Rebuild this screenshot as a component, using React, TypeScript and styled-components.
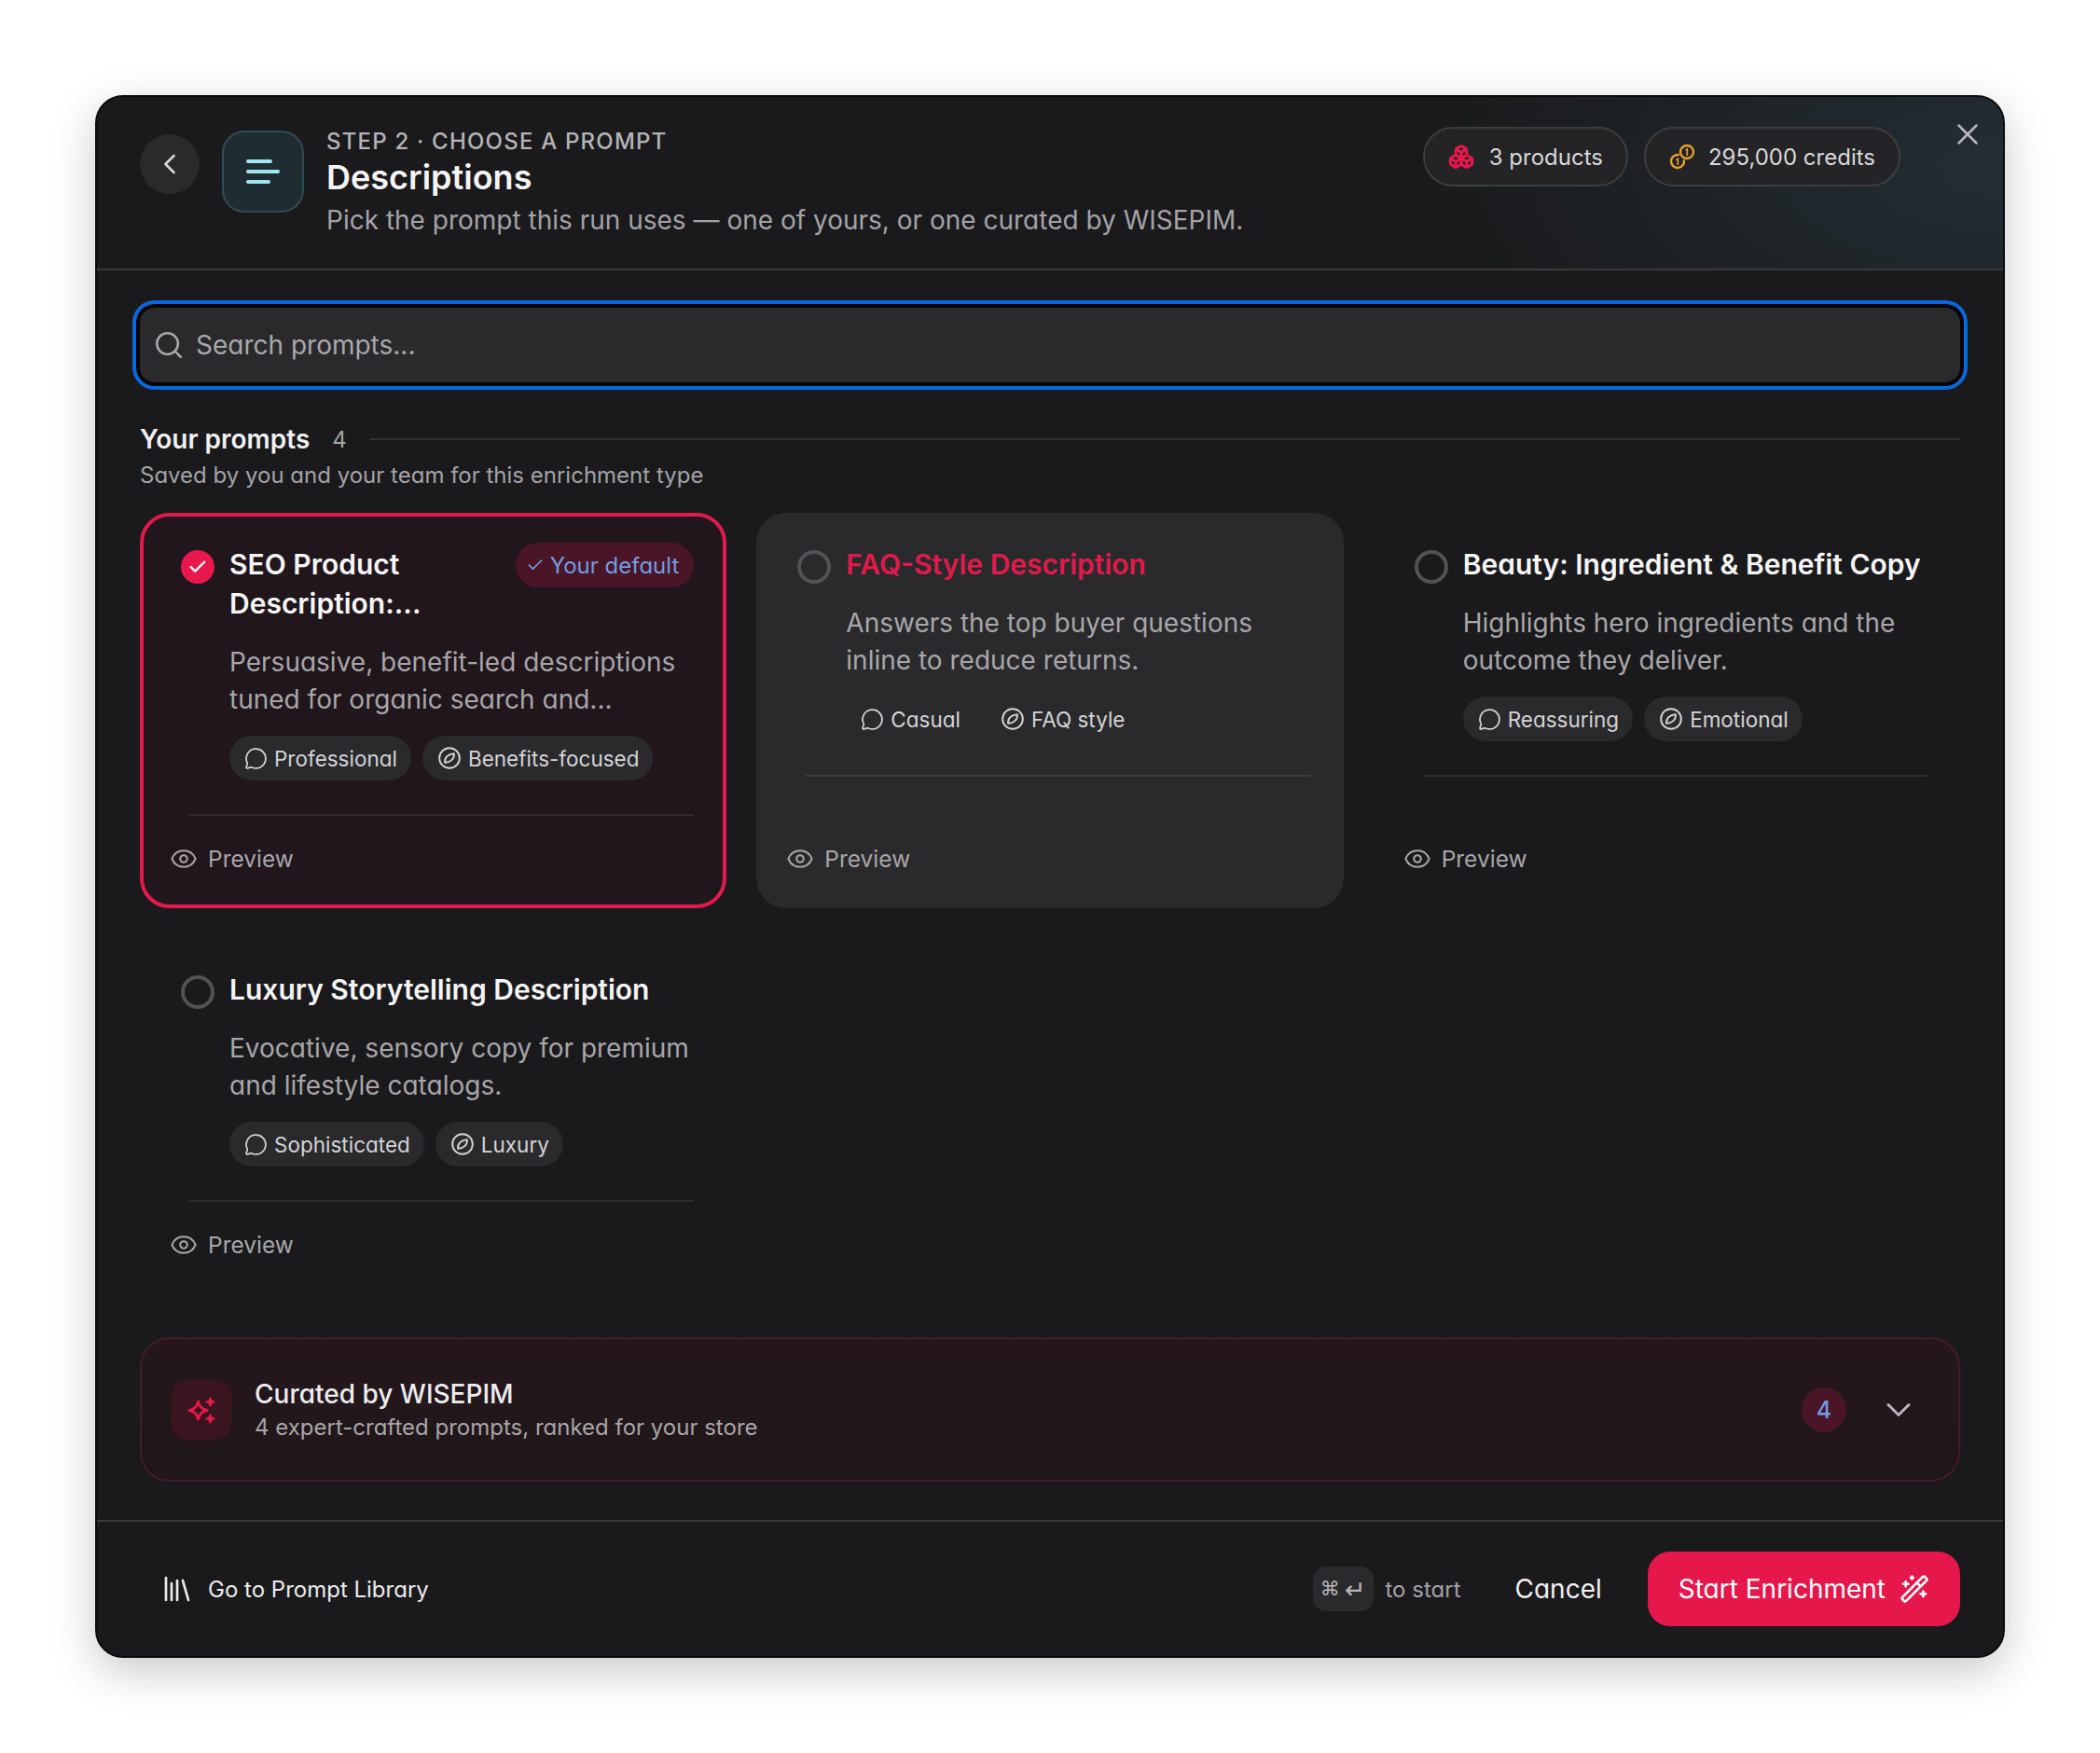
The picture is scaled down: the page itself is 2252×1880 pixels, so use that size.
import React from "react";
import styled, { createGlobalStyle } from "styled-components";
import { Boxes, Check, ChevronDown, ChevronLeft, Eye, Library, MessageCircle, Search, WandSparkles, X } from "lucide-react";

const Global = createGlobalStyle`
  html, body { margin: 0; padding: 0; background: #fff; }
  * { box-sizing: border-box; }
  body { font-family: Inter, "Noto Sans", "Liberation Sans", sans-serif; font-feature-settings: "cv11" 1; -webkit-font-smoothing: antialiased; }
`;

const Page = styled.div`
  padding: 102px;
  width: 2252px;
  height: 1880px;
`;
const Modal = styled.div`
  position: relative;
  width: 2048px;
  height: 1676px;
  display: flex;
  flex-direction: column;
  background: #1a1a1c;
  border: 2px solid #0c0c0d;
  border-radius: 30px;
  overflow: hidden;
  box-shadow: 0 14px 48px rgba(0, 0, 0, 0.22);
`;
const Header = styled.header`
  height: 186px;
  flex: none;
  display: flex;
  align-items: flex-start;
  padding: 31px 110px 0 46px;
  border-bottom: 2px solid #3a3a3c;
  background: radial-gradient(ellipse 620px 300px at 100% 40%, rgba(44, 66, 76, 0.5), rgba(26, 26, 28, 0) 100%), #1a1a1c;
`;
const BackButton = styled.div`
  width: 64px;
  height: 64px;
  margin-top: 9px;
  border-radius: 50%;
  background: #2a2a2c;
  color: #d4d4d8;
  display: flex;
  align-items: center;
  justify-content: center;
  flex: none;
`;
const IconTile = styled.div`
  width: 88px;
  height: 88px;
  margin: 5px 24px 0 24px;
  flex: none;
  border-radius: 24px;
  background: #1f2d32;
  border: 2px solid #2f4a52;
  display: flex;
  flex-direction: column;
  justify-content: center;
  gap: 7px;
  padding-left: 24px;
`;
const Bar = styled.span<{ $w: number }>`
  display: block;
  height: 4px;
  width: ${(p) => p.$w}px;
  border-radius: 2px;
  background: #9fe6f2;
`;
const HeadText = styled.div`
  display: flex;
  flex-direction: column;
  flex: 1;
  padding-top: 1px;
`;
const Eyebrow = styled.div`
  font-size: 24px;
  line-height: 32px;
  font-weight: 500;
  letter-spacing: 1.2px;
  color: #b4b4b8;
`;
const Title = styled.div`
  font-size: 36px;
  line-height: 44px;
  font-weight: 600;
  color: #f5f5f5;
`;
const Sub = styled.div`
  margin-top: 5px;
  font-size: 28px;
  line-height: 38px;
  color: #a3a3a8;
`;
const Pills = styled.div`
  display: flex;
  gap: 17px;
  margin-top: 1px;
`;
const Pill = styled.div<{ $gap: number }>`
  height: 64px;
  padding: 0 25px;
  display: flex;
  align-items: center;
  gap: ${(p) => p.$gap}px;
  border: 2px solid #3d3d40;
  border-radius: 32px;
  background: #242426;
  font-size: 24px;
  font-weight: 400;
  color: #d8d8da;
`;
const Close = styled.div`
  position: absolute;
  top: 21px;
  right: 19px;
  color: #b8b8bc;
  display: flex;
`;
const Body = styled.main`
  flex: 1;
  display: flex;
  flex-direction: column;
  padding: 40px 46px 0;
`;
const SearchBox = styled.div`
  height: 80px;
  flex: none;
  display: flex;
  align-items: center;
  gap: 12px;
  padding: 0 14px;
  border-radius: 16px;
  background: #2a2a2c;
  box-shadow: 0 0 0 4px #050506, 0 0 0 8px #0b68dc;
  color: #a8a8ac;
  font-size: 28px;
`;
const SectionHead = styled.div`
  margin-top: 41px;
  display: flex;
  align-items: center;
  height: 40px;
`;
const SectionTitle = styled.div`
  font-size: 28px;
  font-weight: 600;
  color: #f0f0f0;
`;
const SectionCount = styled.div`
  margin: 0 24px;
  font-size: 24px;
  color: #a3a3a8;
`;
const SectionRule = styled.div`
  flex: 1;
  height: 2px;
  background: #343436;
`;
const SectionSub = styled.div`
  margin-top: 1px;
  font-size: 24px;
  line-height: 36px;
  color: #a3a3a8;
`;
const Grid = styled.div`
  margin-top: 22px;
  display: grid;
  grid-template-columns: repeat(3, 1fr);
  column-gap: 32px;
  row-gap: 32px;
`;
const Card = styled.div<{ $state?: "selected" | "hover" }>`
  display: flex;
  flex-direction: column;
  padding: 30px 31px 31px 40px;
  border: 4px solid ${(p) => (p.$state === "selected" ? "#e01a4c" : "transparent")};
  border-radius: 32px;
  background: ${(p) => (p.$state === "selected" ? "#20161b" : p.$state === "hover" ? "#2a2a2c" : "transparent")};
`;
const CardTop = styled.div`
  display: flex;
  align-items: flex-start;
  gap: 16px;
`;
const Radio = styled.div<{ $on?: boolean }>`
  width: 36px;
  height: 36px;
  margin-top: 6px;
  flex: none;
  border-radius: 50%;
  display: flex;
  align-items: center;
  justify-content: center;
  color: #fff;
  background: ${(p) => (p.$on ? "#e8174c" : "transparent")};
  border: ${(p) => (p.$on ? "none" : "4px solid #525256")};
`;
const CardTitle = styled.div<{ $accent?: boolean }>`
  flex: 1;
  font-size: 30px;
  line-height: 42px;
  font-weight: 600;
  color: ${(p) => (p.$accent ? "#e01a4c" : "#f5f5f5")};
`;
const DefaultBadge = styled.div`
  flex: none;
  height: 48px;
  margin-top: -2px;
  padding: 0 16px 0 11px;
  display: flex;
  align-items: center;
  gap: 6px;
  border-radius: 24px;
  background: #4a1526;
  color: #729ee2;
  font-size: 24px;
`;
const Desc = styled.div`
  margin: 22px 0 0 52px;
  font-size: 28px;
  line-height: 40px;
  color: #a8a6aa;
`;
const Tags = styled.div`
  margin: 19px 0 0 52px;
  display: flex;
  gap: 12px;
`;
const Tag = styled.div`
  height: 48px;
  padding: 0 15px 0 16px;
  display: flex;
  align-items: center;
  gap: 7px;
  border-radius: 24px;
  background: #2a2a2c;
  color: #d4d4d8;
  font-size: 22.5px;
  white-space: nowrap;
`;
const CardRule = styled.div`
  margin: 36px 0 0 8px;
  height: 2px;
  background: rgba(255, 255, 255, 0.08);
`;
const Preview = styled.div`
  margin: auto 0 0 -12px;
  padding-top: 28px;
  display: flex;
  align-items: center;
  gap: 11px;
  font-size: 24.5px;
  line-height: 36px;
  color: #a8a6aa;
`;
const Curated = styled.div`
  margin-top: 46px;
  height: 155px;
  flex: none;
  display: flex;
  align-items: center;
  padding: 0 42px 0 32px;
  border: 2px solid #451a2a;
  border-radius: 32px;
  background: linear-gradient(180deg, #25171c, #1f171a);
`;
const SparkTile = styled.div`
  width: 64px;
  height: 64px;
  flex: none;
  border-radius: 16px;
  background: #3a151f;
  display: flex;
  align-items: center;
  justify-content: center;
  color: #e8174c;
`;
const CuratedText = styled.div`
  flex: 1;
  margin-left: 25px;
`;
const CuratedTitle = styled.div`
  font-size: 28px;
  line-height: 38px;
  font-weight: 500;
  color: #ececee;
`;
const CuratedSub = styled.div`
  font-size: 24px;
  line-height: 34px;
  color: #a8a6aa;
`;
const CountBubble = styled.div`
  width: 48px;
  height: 48px;
  border-radius: 50%;
  background: #4a1526;
  color: #729ee2;
  font-size: 25px;
  font-weight: 500;
  display: flex;
  align-items: center;
  justify-content: center;
`;
const ChevronWrap = styled.div`
  margin-left: 34px;
  color: #b8b8bc;
  display: flex;
`;
const Footer = styled.footer`
  margin-top: auto;
  flex: none;
  height: 146px;
  border-top: 2px solid #3a3a3c;
  padding: 0 46px 0 68px;
  display: flex;
  align-items: center;
`;
const LibraryLink = styled.div`
  display: flex;
  align-items: center;
  gap: 15px;
  color: #ececee;
  font-size: 24px;
  flex: 1;
`;
const Kbd = styled.div`
  width: 65px;
  height: 48px;
  border-radius: 14px;
  background: #2a2a2c;
  color: #b8b8bc;
  font-family: "DejaVu Sans", sans-serif;
  font-size: 21px;
  display: flex;
  align-items: center;
  justify-content: center;
  gap: 5px;
`;
const KbdEnter = styled.span`
  font-size: 27px;
  line-height: 1;
`;
const ToStart = styled.div`
  margin: 0 58px 0 13px;
  font-size: 24px;
  color: #a3a3a8;
`;
const Cancel = styled.div`
  margin-right: 49px;
  font-size: 28px;
  color: #f0f0f0;
`;
const StartButton = styled.div`
  height: 80px;
  padding: 0 33px;
  display: flex;
  align-items: center;
  gap: 15px;
  border-radius: 24px;
  background: #e5174b;
  color: #fff;
  font-size: 28px;
  font-weight: 400;
`;

const Leaf = () => (
  <svg width="26" height="26" viewBox="0 0 24 24" fill="none" stroke="currentColor" strokeWidth="1.8">
    <circle cx="12" cy="12" r="10" />
    <path d="M16.5 7.500c.5 5-3 8.500-9 9-.5-5 3-8.500 9-9z" strokeLinejoin="round" />
  </svg>
);
const Coins = () => (
  <svg width="28" height="28" viewBox="0 0 28 28" fill="none" stroke="#e6a02e" strokeWidth="2.400">
    <circle cx="19" cy="9" r="7" />
    <path d="M17.500 7l1.800-1v7" strokeWidth="1.700" />
    <path d="M10.800 12.200A7 7 0 1 0 15.800 17.200" />
    <path d="M7.500 17.500l1.800-1v6.500" strokeWidth="1.700" />
  </svg>
);
const Sparks = () => (
  <svg width="32" height="32" viewBox="0 0 32 32" fill="none">
    <path d="M12.500 7Q14 15 22 16.500Q14 18 12.500 26Q11 18 3 16.500Q11 15 12.500 7Z" stroke="currentColor" strokeWidth="2.800" strokeLinejoin="round" />
    <path d="M25.500 2.500Q26.200 6.800 30.500 7.500Q26.200 8.200 25.500 12.500Q24.800 8.200 20.500 7.500Q24.800 6.800 25.500 2.500Z" fill="currentColor" stroke="currentColor" />
    <path d="M25.500 20.500Q26.200 24.800 30.500 25.500Q26.200 26.200 25.500 30.500Q24.800 26.200 20.500 25.500Q24.800 24.800 25.500 20.500Z" fill="currentColor" stroke="currentColor" />
  </svg>
);

type P = {
  title: string;
  desc: string;
  tone: string;
  style: string;
  state?: "selected" | "hover";
  accent?: boolean;
  badge?: boolean;
};
const prompts: P[] = [
  { title: "SEO Product Description:...", desc: "Persuasive, benefit-led descriptions tuned for organic search and...", tone: "Professional", style: "Benefits-focused", state: "selected", badge: true },
  { title: "FAQ-Style Description", desc: "Answers the top buyer questions inline to reduce returns.", tone: "Casual", style: "FAQ style", state: "hover", accent: true },
  { title: "Beauty: Ingredient & Benefit Copy", desc: "Highlights hero ingredients and the outcome they deliver.", tone: "Reassuring", style: "Emotional" },
  { title: "Luxury Storytelling Description", desc: "Evocative, sensory copy for premium and lifestyle catalogs.", tone: "Sophisticated", style: "Luxury" },
];

export default function App() {
  return (
    <Page>
      <Global />
      <Modal>
        <Header>
          <BackButton><ChevronLeft size={36} strokeWidth={1.8} /></BackButton>
          <IconTile>
            <Bar $w={28} />
            <Bar $w={36} />
            <Bar $w={26} />
          </IconTile>
          <HeadText>
            <Eyebrow>STEP 2 · CHOOSE A PROMPT</Eyebrow>
            <Title>Descriptions</Title>
            <Sub>Pick the prompt this run uses — one of yours, or one curated by WISEPIM.</Sub>
          </HeadText>
          <Pills>
            <Pill $gap={16}><Boxes size={28} color="#e8174c" strokeWidth={2.6} />3 products</Pill>
            <Pill $gap={14}><Coins />295,000 credits</Pill>
          </Pills>
          <Close><X size={38} strokeWidth={1.6} /></Close>
        </Header>
        <Body>
          <SearchBox><Search size={34} strokeWidth={1.8} />Search prompts...</SearchBox>
          <SectionHead>
            <SectionTitle>Your prompts</SectionTitle>
            <SectionCount>4</SectionCount>
            <SectionRule />
          </SectionHead>
          <SectionSub>Saved by you and your team for this enrichment type</SectionSub>
          <Grid>
            {prompts.map((p) => (
              <Card key={p.title} $state={p.state}>
                <CardTop>
                  <Radio $on={p.state === "selected"}>{p.state === "selected" && <Check size={22} strokeWidth={2.6} />}</Radio>
                  <CardTitle $accent={p.accent}>{p.title}</CardTitle>
                  {p.badge && <DefaultBadge><Check size={20} strokeWidth={2} />Your default</DefaultBadge>}
                </CardTop>
                <Desc>{p.desc}</Desc>
                <Tags>
                  <Tag><MessageCircle size={25} strokeWidth={1.7} />{p.tone}</Tag>
                  <Tag><Leaf />{p.style}</Tag>
                </Tags>
                <CardRule />
                <Preview><Eye size={30} strokeWidth={1.7} />Preview</Preview>
              </Card>
            ))}
          </Grid>
          <Curated>
            <SparkTile><Sparks /></SparkTile>
            <CuratedText>
              <CuratedTitle>Curated by WISEPIM</CuratedTitle>
              <CuratedSub>4 expert-crafted prompts, ranked for your store</CuratedSub>
            </CuratedText>
            <CountBubble>4</CountBubble>
            <ChevronWrap><ChevronDown size={44} strokeWidth={1.6} /></ChevronWrap>
          </Curated>
        </Body>
        <Footer>
          <LibraryLink><Library size={36} strokeWidth={1.8} />Go to Prompt Library</LibraryLink>
          <Kbd><span>⌘</span><KbdEnter>↵</KbdEnter></Kbd>
          <ToStart>to start</ToStart>
          <Cancel>Cancel</Cancel>
          <StartButton>Start Enrichment<WandSparkles size={32} strokeWidth={2} /></StartButton>
        </Footer>
      </Modal>
    </Page>
  );
}
